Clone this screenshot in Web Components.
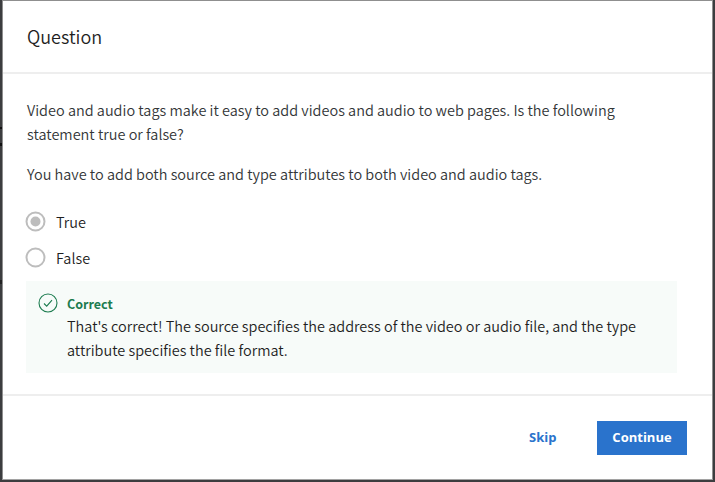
<!DOCTYPE html>
<html lang="en"><head><meta charset="utf-8"><title>Question</title>
<style>
html,body{margin:0;height:100%}
body{background:linear-gradient(#111 0 0) 0 127px/2px 2px no-repeat,linear-gradient(#111 0 0) 0 143px/2px 3px no-repeat,linear-gradient(#222 0 0) 0 280px/2px 4px no-repeat,#3c3d3f;font-family:"Noto Sans CJK SC","Noto Sans",sans-serif;font-weight:350;color:#1f1f1f}
</style></head><body>
<question-dialog>
  <span slot="title">Question</span>
  <quiz-text>Video and audio tags make it easy to add videos and audio to web pages. Is the following<br>statement true or false?</quiz-text>
  <quiz-text>You have to add both source and type attributes to both video and audio tags.</quiz-text>
  <quiz-option checked>True</quiz-option>
  <quiz-option>False</quiz-option>
  <quiz-feedback><span slot="title">Correct</span>That's correct! The source specifies the address of the video or audio file, and the type<br>attribute specifies the file format.</quiz-feedback>
  <quiz-button slot="actions">Skip</quiz-button>
  <quiz-button slot="actions" primary>Continue</quiz-button>
</question-dialog>
<script>
const define=(name,html)=>customElements.define(name,class extends HTMLElement{
  constructor(){super();this.attachShadow({mode:'open'}).innerHTML=html;}
});
define('question-dialog',`<style>
:host{display:flex;flex-direction:column;box-sizing:border-box;width:711px;height:480px;margin-left:2px;background:#fff;border:1px solid #8f8f8f;border-bottom-color:#a2a2a2}
header{box-sizing:border-box;height:73px;border-bottom:2px solid #eee;padding:20px 24px 0;font-size:18px;line-height:30px}
main{box-sizing:border-box;height:320px;padding:24px 24px 0}
footer{box-sizing:border-box;flex:1;border-top:2px solid #eee;padding:25px 25px 0;display:flex;justify-content:flex-end;align-items:flex-start;gap:25px}
</style><header><slot name="title"></slot></header><main><slot></slot></main><footer><slot name="actions"></slot></footer>`);
define('quiz-text',`<style>
:host{display:block;font-size:14.48px;line-height:24px;margin-bottom:16px;color:#333638;white-space:nowrap}
</style><slot></slot>`);
define('quiz-option',`<style>
:host{display:flex;align-items:center;height:36px;font-size:14.48px;line-height:24px;gap:10px;margin-left:-2px}
:host([checked]){margin-top:18px}
svg{width:21px;height:21px;flex:none;margin-top:-1px}
.dot{display:none}:host([checked]) .dot{display:block}
</style><svg viewBox="0 0 21 21"><circle cx="10.5" cy="10.5" r="9" fill="none" stroke="#bdbdbd" stroke-width="2"/><circle class="dot" cx="10.5" cy="10.5" r="5" fill="#bdbdbd"/></svg><slot></slot>`);
define('quiz-feedback',`<style>
:host{display:grid;grid-template-columns:20px 1fr;column-gap:9px;box-sizing:border-box;width:651px;height:92px;margin:5px 0 0 -1px;padding:12px 12px 0;background:#f7fbf9;white-space:nowrap}
svg{width:20px;height:20px}
.t{font-size:12.5px;font-weight:700;line-height:20px;padding-top:1px;color:#1d7c50}
.b{font-size:14.48px;line-height:24px}
</style><svg viewBox="0 0 20 20" fill="none" stroke="#1d7c50" stroke-width="1.1"><circle cx="10" cy="10" r="9"/><path d="M6 10.5l2.7 2.6L14 7.2"/></svg><div><div class="t"><slot name="title"></slot></div><div class="b"><slot></slot></div></div>`);
define('quiz-button',`<style>
:host{display:block;box-sizing:border-box;height:34px;padding:0 15.5px;font:700 13px/32px "Open Sans",sans-serif;color:#2a73cc;white-space:nowrap}
:host([primary]){background:#2a73cc;color:#fff;width:90px;text-align:center;padding:0}
</style><slot></slot>`);
</script></body></html>
